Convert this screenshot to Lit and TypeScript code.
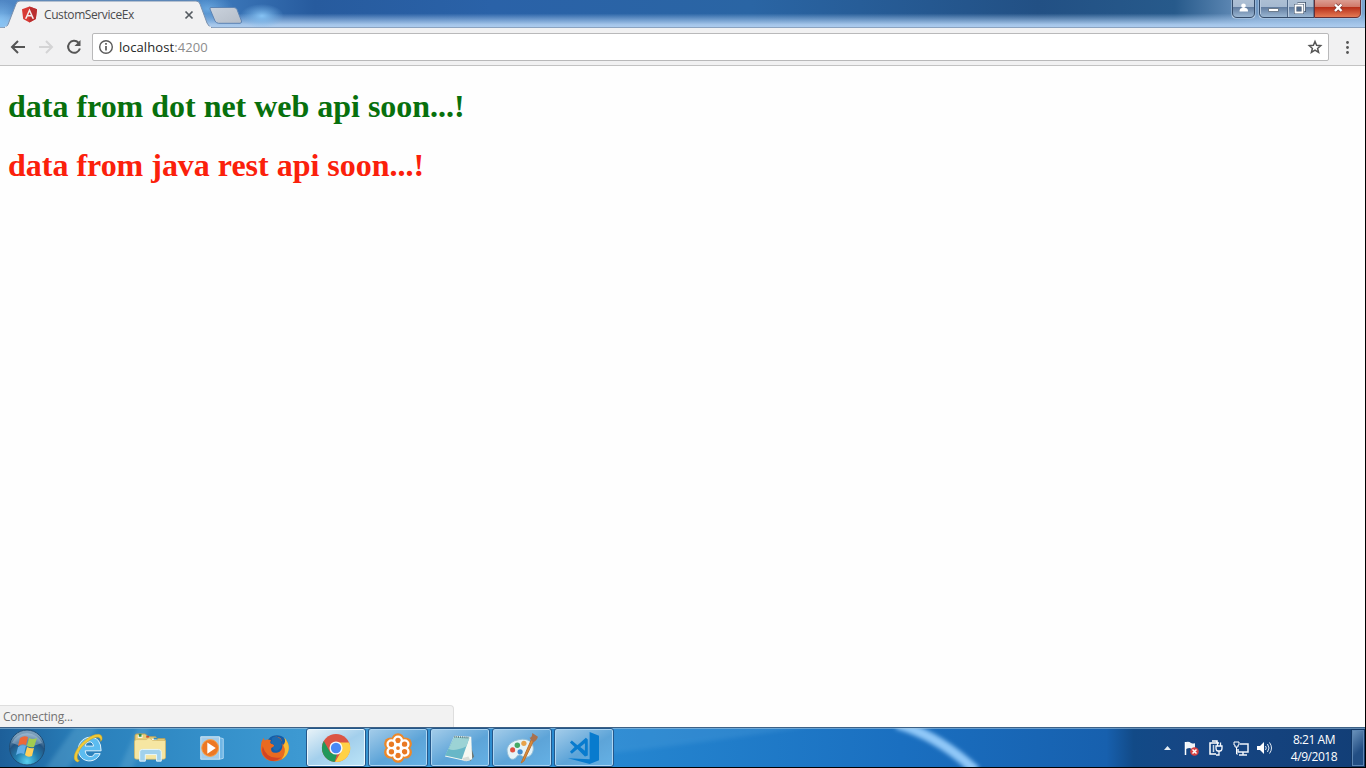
import { LitElement, html, css, svg } from "lit";
import { customElement } from "lit/decorators.js";

@customElement("browser-frame")
class BrowserFrame extends LitElement {
  static styles = css`
    :host { display: block; font: 12px "Open Sans", "Noto Sans", sans-serif; }
    svg { display: block; }
    .title { position: relative; height: 28px; overflow: hidden; display: flex; justify-content: space-between; }
    .glass { position: absolute; inset: 0; }
    .tab { position: relative; width: 211px; height: 28px; box-sizing: border-box; padding: 1px 16px 0 22px; display: flex; align-items: center; }
    .name { margin-left: 7px; color: #4b4b4d; flex: 1; font-size: 12px; letter-spacing: -0.4px; white-space: nowrap; }
    .controls { position: relative; display: flex; align-items: flex-start; padding-right: 3px; }
    .bar { height: 38px; box-sizing: border-box; background: #f1f1f2; display: flex; align-items: center; padding: 0 9px 0 10px; border-bottom: 1px solid #c3c3c3; }
    .nav { display: flex; gap: 12px; }
    .address { margin: 0 0 0 10px; width: 1237px; height: 28px; box-sizing: border-box; border: 1px solid #b9b9ba; border-radius: 2px; background: #fff; display: flex; align-items: center; padding: 0 5px; }
    .url { flex: 1; margin-left: 5px; color: #262626; font-size: 13px; letter-spacing: 0.08px; }
    .port { color: #8c8c8c; }
    .menu { margin-left: 11px; }
  `;

  render() {
    return html`
      <div class="title">
        <svg class="glass" width="1366" height="28">
          <defs>
            <linearGradient id="h"><stop offset="0" stop-color="#4f86c4"/><stop offset=".15" stop-color="#3f7cbe"/><stop offset=".23" stop-color="#275b9e"/><stop offset=".36" stop-color="#2a62a8"/><stop offset=".55" stop-color="#2a65a4"/><stop offset=".76" stop-color="#225084"/><stop offset=".86" stop-color="#275a8b"/><stop offset=".92" stop-color="#7299c3"/><stop offset="1" stop-color="#7ba4cf"/></linearGradient>
            <linearGradient id="v" x2="0" y2="1"><stop offset=".48" stop-color="#a8c9ed" stop-opacity="0"/><stop offset=".88" stop-color="#a5c6ea"/><stop offset="1" stop-color="#afcdef"/></linearGradient>
            <radialGradient id="glow"><stop stop-color="#86c3f4"/><stop offset="1" stop-color="#78b5e9" stop-opacity="0"/></radialGradient>
            <linearGradient id="new" x2="1" y2="1"><stop stop-color="#cad2dd"/><stop offset="1" stop-color="#b5bdc8"/></linearGradient>
          </defs>
          <path fill="url(#h)" d="M0 0h1366v28H0z"/>
          <path fill="url(#v)" d="M0 0h1366v28H0z"/>
          <ellipse cx="262" cy="16" rx="22" ry="12" fill="url(#glow)"/>
          <ellipse cx="208" cy="9" rx="26" ry="15" fill="url(#glow)" opacity=".6"/>
          <ellipse cx="0" cy="22" rx="22" ry="22" fill="url(#glow)"/>
          <path d="M0 27.5h1366" stroke="#8ba3c0"/>
          <path d="M4 28C7 27 8 25 9 22L16 4Q17 1 20 1H196Q199 1 200 4L207 23Q209 27 212 28z" fill="#f1f1f2" stroke="#7990ae"/>
          <path d="M5 27.5H211" stroke="#f1f1f2" stroke-width="2"/>
          <path d="M211 7.500H234Q236 7.500 237 9.500L241.500 21Q242 23 240 23.300H218.500Q216 23 215 21L210 9Q209.500 7.500 211 7.500z" fill="url(#new)" stroke="#5d84b4"/>
        </svg>
        <div class="tab">
          <svg width="15" height="17" viewBox="0 0 15 17"><path fill="#d83a35" d="M7.500.500 15 3.200 13.800 13 7.500 16.500 1.200 13 0 3.200z"/><path fill="#b92f30" d="M7.500.500 15 3.200 13.800 13 7.500 16.500z"/><path fill="#f5eeee" fill-rule="evenodd" d="M7.500 2.500 12.100 12.700H10.300L9.400 10.400H5.600L4.700 12.700H2.900zM7.500 5.900 6.200 9H8.800z"/></svg>
          <span class="name">CustomServiceEx</span>
          <svg width="12" height="12"><path d="M2.500 2.500 9.500 9.500M9.500 2.500 2.500 9.500" stroke="#555b61" stroke-width="1.700"/></svg>
        </div>
        <div class="controls">
          <svg width="131" height="20">
            <defs>
              <linearGradient id="b" x2="0" y2="1"><stop stop-color="#aec0d4"/><stop offset=".43" stop-color="#a5b9d0"/><stop offset=".44" stop-color="#617c9f"/><stop offset="1" stop-color="#9db9d5"/></linearGradient>
              <linearGradient id="r" x2="0" y2="1"><stop stop-color="#dda298"/><stop offset=".43" stop-color="#d07868"/><stop offset=".44" stop-color="#b62d18"/><stop offset="1" stop-color="#e77e58"/></linearGradient>
            </defs>
            <path d="M.500-1V14Q.500 18.500 5 18.500H20Q24.500 18.500 24.500 14V-1zM27.500-1V14Q27.500 18.500 32 18.500H125Q130.500 18.500 130.500 14V-1z" fill="#bdd2e8"/>
            <path d="M1.500-1V13Q1.500 17.500 6 17.500H19Q23.500 17.500 23.500 13V-1zM28.500-1V13Q28.500 17.500 33 17.500H83V-1z" fill="url(#b)" stroke="#344b69"/>
            <path d="M83.500-1V17.500H125Q129.500 17.500 129.500 13V-1z" fill="url(#r)" stroke="#653038"/>
            <path d="M56.500 0V17" stroke="#4e6787"/><path d="M57.500 0V17M29.500 0V14" stroke="#b9cade"/>
            <circle cx="12.500" cy="5.700" r="2.300" fill="#fff"/><path d="M8.500 11.500Q8.500 8 11 8H14.500Q17 8 17 11.500z" fill="#fff"/>
            <path d="M37.500 8.500H47.500V11.500H37.500z" fill="#fff" stroke="#5a6979" stroke-width=".8"/>
            <path d="M66.500 3.500H73.500V10.500H71" fill="none" stroke="#3f536c" stroke-width="3"/><path d="M66.500 3.500H73.500V10.500H71" fill="none" stroke="#eef2f7" stroke-width="1.300"/><path d="M64.500 5.500H71.500V12.500H64.500z" fill="#526b8b" stroke="#465971" stroke-width="3"/><path d="M64.500 5.500H71.500V12.500H64.500z" fill="none" stroke="#fff" stroke-width="1.800"/>
            <path d="M104 4.500 110.500 11M110.500 4.500 104 11" stroke="#7c3a38" stroke-width="3.800"/><path d="M104 4.500 110.500 11M110.500 4.500 104 11" stroke="#fff" stroke-width="2.400"/>
          </svg>
        </div>
      </div>
      <div class="bar">
        <div class="nav">
          <svg width="16" height="16"><path d="M15 8H2M8 2 2 8 8 14" fill="none" stroke="#555" stroke-width="2"/></svg>
          <svg width="16" height="16"><path d="M1 8H14M8 2 14 8 8 14" fill="none" stroke="#d4d4d5" stroke-width="2"/></svg>
          <svg width="16" height="16"><path d="M12.500 3.700A6 6 0 1 0 13.900 9.500" fill="none" stroke="#555" stroke-width="2"/><path d="M14.500 1V7H8.500z" fill="#555"/></svg>
        </div>
        <div class="address">
          <svg width="16" height="16"><circle cx="8" cy="8" r="6.300" fill="none" stroke="#5a5a5a" stroke-width="1.400"/><path d="M8 7V11.500M8 4V5.700" stroke="#5a5a5a" stroke-width="1.700"/></svg>
          <span class="url">localhost<span class="port">:4200</span></span>
          <svg width="16" height="16"><path d="M8 2.500 9.600 6.300 13.700 6.700 10.600 9.400 11.600 13.400 8 11.200 4.400 13.400 5.400 9.400 2.300 6.700 6.400 6.300z" fill="none" stroke="#555" stroke-width="1.500"/></svg>
        </div>
        <svg class="menu" width="16" height="16"><g fill="#555"><circle cx="7.500" cy="3.500" r="1.400"/><circle cx="7.500" cy="8.500" r="1.400"/><circle cx="7.500" cy="13.500" r="1.400"/></g></svg>
      </div>`;
  }
}

const icons = {
  ie: svg`<g><path fill-rule="evenodd" d="M29 22C26 29 18 32 11 28C5 24 4 16 8 10C13 3 22 3 27 8Q30 12 30 19H13Q14 26 20 25Q22 25 23 22zM13 14H22Q21 9 17 9.500T13 14z" fill="#5cbcf0" stroke="#e5f6ff" stroke-width="1"/><path d="M5 31C-3 29 3 15 14 7C23 0 32-1 31 7L29.500 9C30 3 24 3 16 9C7 15 1 27 7 29.500z" fill="#f0cb38" stroke="#c79b25" stroke-width=".5"/></g>`,
  folder: svg`<g><path d="M0 3Q0 1 2 1H11L14 4H22L24 6H32V27H0z" fill="#e9cf78" stroke="#bda25a"/><path d="M3 2H8V5H3zM18 6H23V8H18z" fill="#fff"/><path d="M4 1H7V4H4z" fill="#2b8e48"/><path d="M12 3H15V5H12z" fill="#c74d34"/><path d="M20 5H24V7H20z" fill="#368db8"/><path d="M-.5 9Q-.5 7 2 7H12L15 5 19 8H32.500V26Q32.500 28 30 28H2Q-.5 28-.5 26z" fill="#f6e6a2" stroke="#d0b566" stroke-width=".7"/><path d="M5 30V20Q5 17.500 8 17.500H25Q28 17.500 28 20V30H23V23H11V30z" fill="#a1d1ec" stroke="#e8f7ff"/></g>`,
  media: svg`<g><path d="M24 5 28 6V27L24 28z" fill="#70b6e5" stroke="#aed6f1"/><path d="M4 4H24V28H4z" fill="#a2cceb" stroke="#d0e7f5"/><circle cx="14" cy="16" r="9" fill="#ed7824" stroke="#f5a34c"/><path d="M11 10 20 16 11 22z" fill="#fff"/></g>`,
  firefox: svg`<g><circle cx="19" cy="14.500" r="12" fill="#155da7"/><path d="M17 4C23 3 26 8 24 13C28 12 29 9 27 5C36 14 31 29 18 30C8 31 1 24 2 14Q2 9 5 5L6 8Q9 6 13 8Q10 11 15 12Q18 14 13 16Q12 22 19 21Q25 20 25 13Q25 5 17 4z" fill="#e96a20"/><path d="M17 4Q24 4 24 13Q23 18 18 19Q14 18 15 15Q18 14 15 12Q11 11 14 8Q12 5 17 4z" fill="#1d6bb1"/><path d="M27 5C36 14 31 25 24 28Q30 20 26 13Q29 9 27 5z" fill="#f7bd34"/><path d="M4 14Q8 29 24 26Q14 34 6 25Q2 21 4 14z" fill="#d24424"/></g>`,
  chrome: svg`<g><circle cx="16" cy="16" r="15" fill="#db5544"/><path d="M30 10H17L22 19 15 31A15 15 0 0 0 30 10z" fill="#ffd146"/><path d="M3 8.500 10 21 17 23 14.500 31A15 15 0 0 1 3 8.500z" fill="#21985b"/><circle cx="16" cy="16" r="7" fill="#f6fafb"/><circle cx="16" cy="16" r="5.500" fill="#4988f5"/></g>`,
  flower: svg`<g><g fill="#ee8829"><circle cx="16" cy="7" r="6.800"/><circle cx="24" cy="11.500" r="6.800"/><circle cx="24" cy="20.500" r="6.800"/><circle cx="16" cy="25" r="6.800"/><circle cx="8" cy="20.500" r="6.800"/><circle cx="8" cy="11.500" r="6.800"/><circle cx="16" cy="16" r="9"/></g><g fill="#e97923" stroke="#fff" stroke-width="2.500"><circle cx="16" cy="8" r="4.100"/><circle cx="23" cy="12" r="4.100"/><circle cx="23" cy="20" r="4.100"/><circle cx="16" cy="24" r="4.100"/><circle cx="9" cy="20" r="4.100"/><circle cx="9" cy="12" r="4.100"/></g><circle cx="16" cy="16" r="4.700" fill="#fff"/><circle cx="16" cy="16" r="2" fill="#e97923"/></g>`,
  notepad: svg`<g><path d="M25 6 31 25 27 30 24 21z" fill="#6b7774"/><path d="M10 3 28 4 29 28 23 30 0 25z" fill="#f5f8f2"/><path d="M10 4 26 5 18 28 0 24z" fill="#68b7c7"/><path d="M10 4 26 5 23 14Q10 20 4 17z" fill="#9cd3d5"/><path d="M18 27 25 25 27 29 21 30z" fill="#d8ddd8"/><path d="M10 4 26 5" stroke="#5d7b82" stroke-width="2" stroke-dasharray="1 1"/></g>`,
  paint: svg`<g><path d="M13 7C22 5 29 10 28 18C27 25 20 28 15 24Q12 22 9 27C3 31 0 23 0 17Q2 9 13 7z" fill="#e5f3f8" stroke="#91bdd5"/><circle cx="6" cy="18" r="2.700" fill="#df5141"/><circle cx="11" cy="13" r="2.900" fill="#45a965"/><circle cx="18" cy="11" r="2.800" fill="#e7a24a"/><circle cx="14" cy="20" r="2.800" fill="#408bd0"/><path d="M26 7 28 9 18 30 15 32z" fill="#db8b37" stroke="#b76e30"/><path d="M24 5Q27 5 27 0L33 4Q32 8 28 10z" fill="#a8714f"/></g>`,
  code: svg`<g fill="#087bce"><path d="M22-1 32 3V29L22 33-1 27 22 28z"/><path fill-rule="evenodd" d="M1 10 3 8 9 13 18 5 20 7V24L17 25 9 17 3 22 1 20 6 15zM12 15 17 19V11z"/></g>`,
};

@customElement("task-bar")
class TaskBar extends LitElement {
  static styles = css`
    :host { display: block; position: relative; height: 40px; overflow: hidden; font: 12px "Open Sans", "Noto Sans", sans-serif; }
    svg { display: block; overflow: visible; }
    .back { position: absolute; inset: 0; }
    .row { position: relative; display: flex; height: 40px; }
    .start { width: 57px; padding-left: 8px; box-sizing: border-box; }
    .item { width: 62px; height: 40px; display: flex; align-items: center; justify-content: center; box-sizing: border-box; padding-top: 1px; }
    .item.open { width: 60px; height: 39px; margin: 1px 1px 0; border: 1px solid #24578a; border-radius: 3px; background: linear-gradient(150deg, #a5cdea, #5da4d8 55%, #65b1e5); box-shadow: inset 0 0 0 1px #add6f3; padding: 0; }
    .item.active { background: linear-gradient(150deg, #e9f3f8, #a3cfec 50%, #bbe4f7); box-shadow: inset 0 0 0 1px #e9f8ff; }
    .pins { display: flex; }
    .tray { margin-left: auto; display: flex; align-items: center; padding-top: 1px; }
    .clock { width: 60px; margin-left: 9px; text-align: center; color: #fff; font-size: 12px; line-height: 17px; letter-spacing: -0.45px; }
    .show { width: 14px; height: 38px; margin: 1px 0 0 7px; box-sizing: border-box; border: 1px solid #123765; box-shadow: inset 0 0 0 1px #5b85b2; background: linear-gradient(135deg, #6e96be, #224e83 60%); }
  `;

  render() {
    const pins = [icons.ie, icons.folder, icons.media, icons.firefox];
    const open = [icons.chrome, icons.flower, icons.notepad, icons.paint, icons.code];
    return html`
      <svg class="back" width="1366" height="40">
        <defs>
          <linearGradient id="base"><stop stop-color="#1d5f99"/><stop offset=".06" stop-color="#297fba"/><stop offset=".15" stop-color="#348fc9"/><stop offset=".22" stop-color="#3d99d2"/><stop offset=".45" stop-color="#2586d0"/><stop offset=".66" stop-color="#1a6fc0"/><stop offset=".81" stop-color="#1760ae"/><stop offset=".83" stop-color="#124a87"/><stop offset=".87" stop-color="#164684"/><stop offset="1" stop-color="#123e76"/></linearGradient>
          <filter id="soft"><feGaussianBlur stdDeviation="2"/></filter>
        </defs>
        <path fill="url(#base)" d="M0 0h1366v40H0z"/>
        <path d="M45 42 75 0H98L67 42zM119 42 138 0H150L132 42z" fill="#73b6d8" opacity=".3" filter="url(#soft)"/>
        <path d="M610 26Q690 18 820-2H610z" fill="#68b0e4" opacity=".2" filter="url(#soft)"/>
        <path d="M897-3Q939 9 976 44" fill="none" stroke="#90c8f8" stroke-width="10" filter="url(#soft)"/>
        <path d="M0 .5H1366" stroke="#3d6186"/><path d="M0 1.500H1366" stroke="#a6c8e2" opacity=".55"/>
      </svg>
      <div class="row">
        <div class="start">
          <svg width="38" height="40">
            <defs><radialGradient id="orb" cx=".5" cy=".9" r=".8"><stop stop-color="#58d1ef"/><stop offset=".4" stop-color="#237fb0"/><stop offset=".75" stop-color="#235482"/><stop offset="1" stop-color="#7b9eba"/></radialGradient></defs>
            <circle cx="19" cy="20.500" r="17.500" fill="url(#orb)" stroke="#204e76"/>
            <path d="M4 16A16 15 0 0 1 34 16Q19 23 4 16z" fill="#d8e9f5" opacity=".35"/>
            <path d="M12 11Q16 8 20 10L18 18Q14 16 10 19z" fill="#ed6837"/><path d="M21 11Q25 13 29 11L26 20Q23 21 19 19z" fill="#a3cc50"/><path d="M10 20Q14 17 18 19L16 27Q12 25 8 28z" fill="#62aee7"/><path d="M19 20Q23 22 26 21L24 29Q20 31 17 28z" fill="#ffd05a"/>
          </svg>
        </div>
        <div class="pins">${pins.map((i) => html`<div class="item"><svg width="30" height="30" viewBox="0 0 32 32">${i}</svg></div>`)}</div>
        <div class="pins">${open.map((i, n) => html`<div class="item open ${n === 0 ? "active" : ""}"><svg width="30" height="30" viewBox="0 0 32 32">${i}</svg></div>`)}</div>
        <div class="tray">
          <svg width="112" height="20">
            <path d="M1 12 4.500 8 8 12z" fill="#e5edf4"/>
            <path d="M22.500 4V17" stroke="#fff" stroke-width="1.500"/><path d="M23 4Q26 3 28 5 31 6 32 5V11Q29 12 27 10 25 10 23 11z" fill="#f1f5f9"/><circle cx="31.500" cy="13.500" r="4.300" fill="#d74243"/><path d="M29.500 11.500 33.500 15.500M33.500 11.500 29.500 15.500" stroke="#fff" stroke-width="1.500"/>
            <path d="M53 16H47V5H56M49 3H54V5" fill="none" stroke="#fff" stroke-width="1.500"/><path d="M50.500 7V14" stroke="#cad8e7" stroke-width="1.500"/><path d="M53 8H59V10Q59 13 57 13H55Q53 13 53 10zM54.500 4.500V8M57.500 4.500V8M56 13V17H53" fill="none" stroke="#f7faff" stroke-width="1.300"/>
            <path d="M77 6H85V14H75V11M80 14V17M76 17H84" fill="none" stroke="#eef4fa" stroke-width="1.500"/><path d="M71 4H76V7H75V9H72V7H71zM73.500 9V16H75" fill="none" stroke="#fff"/>
            <path d="M94 8H97L101 4V16L97 12H94z" fill="#fff"/><path d="M102.500 8Q104 10 102.500 12M104.500 6Q107.500 10 104.500 14M106.500 4.500Q110.500 10 106.500 15.500" fill="none" stroke="#e3ecf5"/>
          </svg>
          <div class="clock">8:21 AM<br>4/9/2018</div>
          <div class="show"></div>
        </div>
      </div>`;
  }
}

@customElement("app-root")
class AppRoot extends LitElement {
  static styles = css`
    :host { display: flex; flex-direction: column; width: 1366px; height: 768px; box-sizing: border-box; background: #fefefe; overflow: hidden; border-right: 1px solid #000; border-bottom: 1px solid #000; }
    browser-frame, task-bar { flex: none; }
    .page { flex: 1; padding: 0 8px; min-height: 0; }
    h1 { font: bold 32px/37px "Liberation Serif", serif; margin: 22px 0; white-space: nowrap; letter-spacing: -0.015px; }
    .green { color: #08700d; }
    .red { color: #fb200b; }
    .status { width: 454px; height: 22px; box-sizing: border-box; border: 1px solid #dedede; border-left: 0; border-bottom: 0; border-radius: 0 4px 0 0; background: #f2f2f2; color: #737373; font: 12px/21px "Open Sans", "Noto Sans", sans-serif; letter-spacing: -0.22px; padding-left: 3px; }
  `;

  render() {
    return html`
      <browser-frame></browser-frame>
      <div class="page">
        <h1 class="green">data from dot net web api soon...!</h1>
        <h1 class="red">data from java rest api soon...!</h1>
      </div>
      <div class="status">Connecting...</div>
      <task-bar></task-bar>`;
  }
}
